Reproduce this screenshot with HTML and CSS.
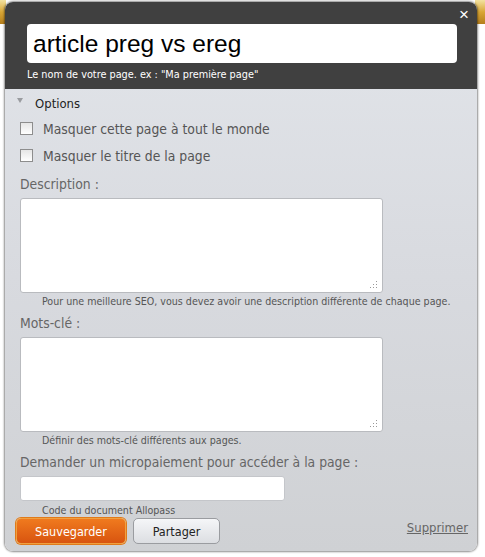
FILE: index.html
```html
<!DOCTYPE html>
<html lang="fr">
<head>
<meta charset="utf-8">
<title>Page</title>
<link rel="stylesheet" href="styles.css">
</head>
<body>
<div class="backdrop">
  <div class="strip strip-left"></div>
  <div class="strip strip-right"></div>
  <div class="dialog">
    <div class="header">
      <span class="close">×</span>
      <div class="title-input">article preg vs ereg</div>
      <div class="title-help">Le nom de votre page. ex : "Ma première page"</div>
    </div>
    <div class="body">
      <div class="options"><span class="tri"></span><span>Options</span></div>
      <label class="check"><span class="box"></span>Masquer cette page à tout le monde</label>
      <label class="check"><span class="box"></span>Masquer le titre de la page</label>
      <div class="label">Description :</div>
      <div class="textarea"><span class="grip"></span></div>
      <div class="help">Pour une meilleure SEO, vous devez avoir une description différente de chaque page.</div>
      <div class="label">Mots-clé :</div>
      <div class="textarea"><span class="grip"></span></div>
      <div class="help">Définir des mots-clé différents aux pages.</div>
      <div class="label">Demander un micropaiement pour accéder à la page :</div>
      <div class="field"></div>
      <div class="help help-last">Code du document Allopass</div>
      <div class="actions">
        <button class="btn btn-primary">Sauvegarder</button>
        <button class="btn">Partager</button>
        <a class="delete">Supprimer</a>
      </div>
    </div>
  </div>
</div>
</body>
</html>
```
FILE: styles.css
```css
html, body {
  margin: 0;
  padding: 0;
  background: #ffffff;
}
.backdrop {
  position: relative;
  width: 485px;
  height: 557px;
  overflow: hidden;
  padding-top: 2px;
  box-sizing: border-box;
}
.strip {
  position: absolute;
  top: 0;
  height: 24px;
  background: linear-gradient(#f3e2a0, #d9a635 50%, #b57e1c);
}
.strip-left { left: 0; width: 6px; }
.strip-right { right: 0; width: 10px; }
.dialog {
  position: relative;
  margin-left: 5px;
  width: 472px;
  height: 549px;
  border-radius: 8px;
  overflow: hidden;
  background: linear-gradient(#e2e5ea, #d8dadf 50%, #cfd1d4);
  box-shadow: 0 0 2px 1px rgba(0,0,0,0.45);
  font-family: "DejaVu Sans Condensed", "DejaVu Sans", sans-serif;
}
.header {
  position: relative;
  background: #404040;
  height: 87px;
  padding: 22px 0 0 22px;
  box-sizing: border-box;
}
.close {
  position: absolute;
  right: 8px;
  top: 3px;
  color: #ffffff;
  font-family: "Liberation Sans", sans-serif;
  font-size: 17px;
}
.title-input {
  width: 430px;
  height: 39px;
  box-sizing: border-box;
  background: #ffffff;
  border-radius: 4px;
  padding-left: 6px;
  font-family: "Liberation Sans", sans-serif;
  font-size: 24.5px;
  line-height: 40px;
  color: #000;
}
.title-help {
  margin-top: 5px;
  color: #ffffff;
  font-size: 10.8px;
}
.body {
  padding: 3px 0 0 10px;
  display: flex;
  flex-direction: column;
  align-items: flex-start;
}
.options {
  display: flex;
  align-items: center;
  height: 22px;
  font-size: 13px;
  color: #222;
}
.tri {
  width: 0;
  height: 0;
  border-left: 3px solid transparent;
  border-right: 3px solid transparent;
  border-top: 5px solid #9a9ca0;
  margin: -6px 12px 0 2px;
}
.check {
  display: flex;
  align-items: center;
  height: 27px;
  font-size: 13.8px;
  color: #555;
}
.check:first-of-type { margin-top: 1px; }
.box {
  width: 11px;
  height: 11px;
  border: 1px solid #8d8d8d;
  background: linear-gradient(#e6e6e6, #ffffff);
  margin: 0 10px 0 5px;
}
.label {
  margin: 4px 0 0 5px;
  height: 22px;
  line-height: 22px;
  font-size: 13.8px;
  color: #666;
}
.textarea {
  position: relative;
  margin: 3px 0 0 5px;
  width: 363px;
  height: 95px;
  box-sizing: border-box;
  background: #fff;
  border: 1px solid #b9bbbf;
  border-radius: 3px;
}
.grip {
  position: absolute;
  right: 5px;
  bottom: 4px;
  width: 8px;
  height: 8px;
  background:
    radial-gradient(circle, #999 0.8px, transparent 1px) 0 0 / 3px 3px;
  clip-path: polygon(100% 0, 100% 100%, 0 100%);
}
.help {
  margin: 1px 0 0 27px;
  font-size: 10.6px;
  color: #555;
  height: 14px;
  line-height: 14px;
}
.help-last { margin-top: 2px; }
.field {
  margin: 3px 0 0 5px;
  width: 265px;
  height: 25px;
  box-sizing: border-box;
  background: #fff;
  border: 1px solid #c4c6ca;
  border-radius: 3px;
}
.actions {
  margin-top: 1px;
  margin-left: 1px;
  display: flex;
  align-items: center;
  width: 452px;
  gap: 7px;
}
.btn {
  height: 26px;
  width: 87px;
  padding: 0;
  border: 1px solid #9a9ca0;
  border-radius: 5px;
  background: linear-gradient(#f5f6f8, #dcdee2);
  font-family: "DejaVu Sans Condensed", "DejaVu Sans", sans-serif;
  font-size: 12.5px;
  color: #222;
}
.btn-primary {
  width: 110px;
  border-color: #f0a040;
  background: linear-gradient(#f07a1e, #d85410);
  color: #ffffff;
  box-shadow: 0 0 0 1px #e07a1a;
}
.delete {
  margin-left: auto;
  margin-top: -8px;
  font-size: 13px;
  color: #666;
  text-decoration: underline;
}
```
